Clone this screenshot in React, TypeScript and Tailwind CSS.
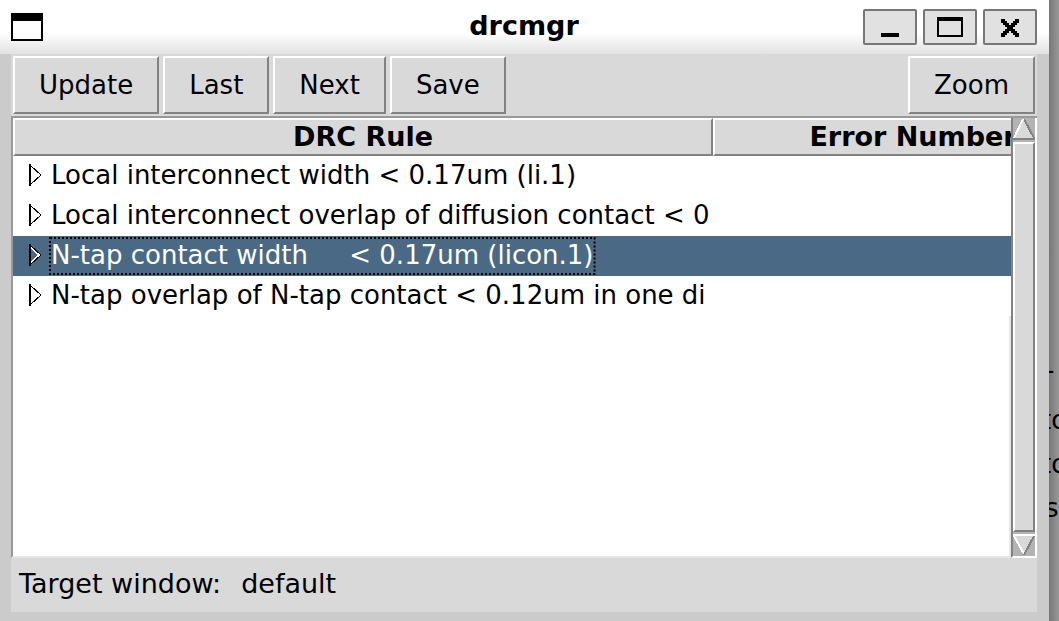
import React from "react";

const rules = [
  { name: "Local interconnect width < 0.17um (li.1)", selected: false },
  { name: "Local interconnect overlap of diffusion contact < 0", selected: false },
  { name: "N-tap contact width     < 0.17um (licon.1)", selected: true },
  { name: "N-tap overlap of N-tap contact < 0.12um in one di", selected: false },
];

const raised = "border-2 border-t-white border-l-white border-r-[#828282] border-b-[#828282] bg-[#d9d9d9]";

function ToolButton({ children }: { children: React.ReactNode }) {
  return <button className={`h-[58px] px-6 text-[26px] leading-8 ${raised}`}>{children}</button>;
}

function TitleButton({ label, children }: { label: string; children: React.ReactNode }) {
  return (
    <button
      aria-label={label}
      className="flex h-9 w-[54px] items-center justify-center rounded-[2px] border-2 border-[#777] bg-[#e1e1e1]"
    >
      <svg width="50" height="32" viewBox="0 0 50 32" shapeRendering="crispEdges">
        {children}
      </svg>
    </button>
  );
}

function TitleBar() {
  return (
    <header className="flex h-[54px] items-center justify-between bg-linear-to-b from-white from-60% to-[#e2e2e2] pr-3 pb-0.5 pl-[11px]">
      <div className="flex flex-1 pt-0.5">
        <button aria-label="Window menu">
          <svg width="32" height="28" viewBox="0 0 32 28" shapeRendering="crispEdges">
            <path d="M0 0h32v28H0z" fill="#000" />
            <path d="M2 8h28v18H2z" fill="#fff" />
          </svg>
        </button>
      </div>
      <h1 className="text-[27px] leading-8 font-bold">drcmgr</h1>
      <div className="flex flex-1 justify-end gap-1.5 pt-0.5">
        <TitleButton label="Minimize">
          <path d="M16 22h18v4H16z" />
        </TitleButton>
        <TitleButton label="Maximize">
          <path d="M12 6h26v20H12zM14 10v14h22V10z" fillRule="evenodd" />
        </TitleButton>
        <TitleButton label="Close">
          <path d="M16 8h4v2h-4zM30 8h4v2h-4zM16 10h6v2h-6zM28 10h6v2h-6zM18 12h6v2h-6zM26 12h6v2h-6zM20 14h10v2H20zM22 16h6v2h-6zM20 18h10v2H20zM18 20h6v2h-6zM26 20h6v2h-6zM16 22h6v2h-6zM28 22h6v2h-6zM16 24h4v2h-4zM30 24h4v2h-4z" />
        </TitleButton>
      </div>
    </header>
  );
}

function RuleTable() {
  return (
    <div className="flex min-w-0 flex-1 flex-col overflow-hidden border-b-2 border-l-2 border-b-[#e6e6e6] border-l-[#999] bg-white">
      <table className="w-[1100px] table-fixed border-separate border-spacing-0 text-[26px] leading-8">
        <colgroup>
          <col className="w-[700px]" />
          <col className="w-[400px]" />
        </colgroup>
        <thead className="text-[27px]">
          <tr>
            <th className={`h-[38px] p-0 font-bold ${raised}`}>DRC Rule</th>
            <th className={`h-[38px] p-0 font-bold ${raised}`}>Error Number</th>
          </tr>
        </thead>
        <tbody>
          {rules.map((rule) => (
            <tr key={rule.name} className={rule.selected ? "bg-[#4a6984] text-white" : "text-black"}>
              <td className="h-10 overflow-hidden p-0">
                <div className="flex items-center pb-0.5 pl-4">
                  <button aria-label="Expand" className="mr-[9px] shrink-0">
                    <svg width="13" height="22" viewBox="0 0 13 22" shapeRendering="crispEdges">
                      <path d="M2 3L10 11L2 19" fill="none" stroke="#fff" strokeWidth="2" />
                      <path d="M1 1L12 11L1 21Z" fill="none" stroke="#000" />
                      <path d="M0 0h2v22H0z" />
                    </svg>
                  </button>
                  <span className="relative whitespace-pre">
                    {rule.name}
                    {rule.selected && (
                      <svg className="absolute -inset-x-0.5 -top-0.5 h-[38px] w-[calc(100%+4px)]" aria-hidden="true">
                        <rect x="1" y="1" width="calc(100% - 2px)" height="36" fill="none" stroke="#000" strokeWidth="2" strokeDasharray="2 2" />
                      </svg>
                    )}
                  </span>
                </div>
              </td>
              <td className="p-0" />
            </tr>
          ))}
        </tbody>
      </table>
      <div className="flex-1 border-r-2 border-[#e6e6e6]" />
    </div>
  );
}

function ScrollBar() {
  return (
    <div className="flex w-[26px] shrink-0 flex-col border-r-2 border-b-2 border-l-2 border-r-white border-b-white border-l-[#828282] bg-[#b3b3b3]">
      <button aria-label="Scroll up">
        <svg className="block" width="22" height="22" viewBox="0 0 22 22" shapeRendering="crispEdges">
          <path d="M11 1L21 21H1Z" fill="#d9d9d9" />
          <path d="M11 1L21 20" stroke="#828282" strokeWidth="2" />
          <path d="M0 21H22" stroke="#828282" strokeWidth="2" />
          <path d="M10 1L1 20" stroke="#fff" strokeWidth="2" />
        </svg>
      </button>
      <div className={`my-0.5 flex-1 ${raised}`} />
      <button aria-label="Scroll down">
        <svg className="block" width="22" height="22" viewBox="0 0 22 22" shapeRendering="crispEdges">
          <path d="M1 1H21L11 21Z" fill="#d9d9d9" />
          <path d="M1 2L11 20" stroke="#fff" strokeWidth="2" />
          <path d="M21 2L11 21" stroke="#828282" strokeWidth="2" />
          <path d="M0 1H22" stroke="#fff" strokeWidth="2" />
        </svg>
      </button>
    </div>
  );
}

export default function App() {
  return (
    <div className="flex min-h-screen bg-[#888] font-['DejaVu_Sans',sans-serif] text-black">
      <main className="flex min-w-0 flex-1 flex-col bg-[#cbcbcb]">
        <TitleBar />
        <div className="mr-3 mb-[9px] ml-[11px] flex flex-1 flex-col bg-[#d9d9d9]">
          <nav className="flex gap-1 p-0.5">
            <ToolButton>Update</ToolButton>
            <ToolButton>Last</ToolButton>
            <ToolButton>Next</ToolButton>
            <ToolButton>Save</ToolButton>
            <div className="flex-1" />
            <ToolButton>Zoom</ToolButton>
          </nav>
          <section className="flex flex-1 border-t-2 border-[#999]">
            <RuleTable />
            <ScrollBar />
          </section>
          <footer className="flex h-[54px] gap-5 px-2 pt-2.5 text-[27px] leading-8">
            <span>Target window:</span>
            <span>default</span>
          </footer>
        </div>
      </main>
      <aside className="w-2.5 shrink-0 overflow-hidden bg-linear-to-r from-[#777] to-[#999] pt-[348px] text-[26px] leading-[44px]">
        <div className="-ml-1 pb-1.5">-</div>
        <div className="-ml-2">to</div>
        <div className="-ml-2">to</div>
        <div className="-ml-1 whitespace-nowrap">st</div>
      </aside>
    </div>
  );
}
